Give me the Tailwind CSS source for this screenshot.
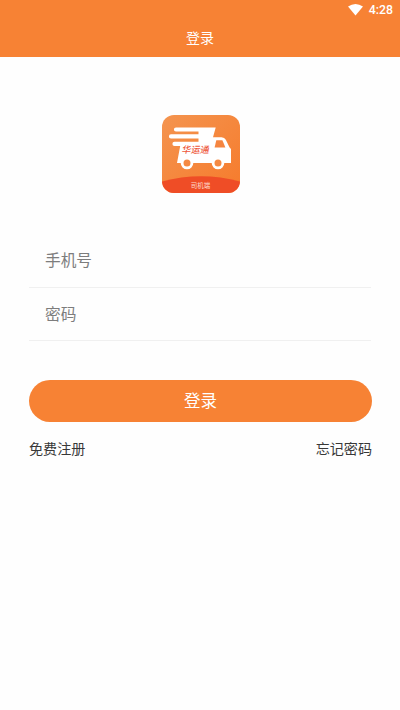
<!DOCTYPE html>
<html lang="zh-CN">
<head>
<meta charset="utf-8">
<title>登录</title>
<script src="https://cdn.jsdelivr.net/npm/@tailwindcss/browser@4"></script>
</head>
<body class="bg-[#fefefe] font-['Noto_Sans_CJK_SC',sans-serif]">
<div class="flex h-[710px] w-[400px] flex-col overflow-hidden">
  <header class="flex h-[57px] flex-col bg-[#f78234] text-white">
    <div class="flex h-[21px] items-center justify-end gap-[6px] pr-[7px]">
      <svg class="mb-px h-[12px] w-[15px]" viewBox="0 0 15 12"><path d="M0 2.6Q7.5-2.6 15 2.6L7.5 11.6Z" fill="#fff"/></svg>
      <span class="font-['Roboto',sans-serif] text-[12.3px] leading-[21px] font-medium">4:28</span>
    </div>
    <h1 class="h-[32px] text-center text-[14px] leading-[32px]">登录</h1>
  </header>
  <main class="flex flex-col px-[29px] pt-[58px]">
    <svg class="ml-[133px] h-[78px] w-[78px]" viewBox="0 0 78 78">
      <defs>
        <linearGradient id="bg" x1="0" y1="0" x2="1" y2="1"><stop offset="0" stop-color="#f4944f"/><stop offset="1" stop-color="#f67b2c"/></linearGradient>
        <clipPath id="tile"><rect width="78" height="78" rx="12"/></clipPath>
      </defs>
      <g clip-path="url(#tile)">
        <rect width="78" height="78" fill="url(#bg)"/>
        <path d="M0 66.5Q39 56 78 66.5V78H0Z" fill="#ef4d26"/>
      </g>
      <path d="M14 12.4H53.7L51 22.3H59.5Q62.6 22.3 63.8 24.8L67.6 32.4 69 34V48H15L18.2 31H12.5a2 2 0 0 1 0-4.2H36.5V23.5H9a2 2 0 0 1 0-4.2H36.5V16.6H14a2 2 0 0 1 0-4.2Z" fill="#fff"/>
      <path d="M54.3 25.3H60.4L63.4 32.6H52.6Z" fill="#f58540"/>
      <circle cx="25" cy="48" r="4.9" fill="#f58a43" stroke="#fff" stroke-width="2.8"/>
      <circle cx="56" cy="48" r="4.9" fill="#f58a43" stroke="#fff" stroke-width="2.8"/>
      <text transform="translate(19.6 38) skewX(-10)" font-size="9.1" font-weight="500" fill="#ee573b">华运通</text>
      <text x="38.5" y="73" text-anchor="middle" font-size="6.5" fill="#ffd9cc">司机端</text>
    </svg>
    <div class="mt-[41px] flex h-[54px] items-center border-b border-[#f0f0f0] pb-[2px] pl-4 text-[15.7px] text-[#7d7d7d]">手机号</div>
    <div class="flex h-[53px] items-center border-b border-[#f0f0f0] pb-px pl-4 text-[15.7px] text-[#7d7d7d]">密码</div>
    <button class="mt-[39px] h-[42px] w-[343px] rounded-full bg-[#f78234] pb-px text-[16.5px] text-white">登录</button>
    <div class="mt-[14px] flex w-[343px] justify-between text-[14.1px] leading-[24px] text-[#383838]"><a>免费注册</a><a>忘记密码</a></div>
  </main>
</div>
</body>
</html>
